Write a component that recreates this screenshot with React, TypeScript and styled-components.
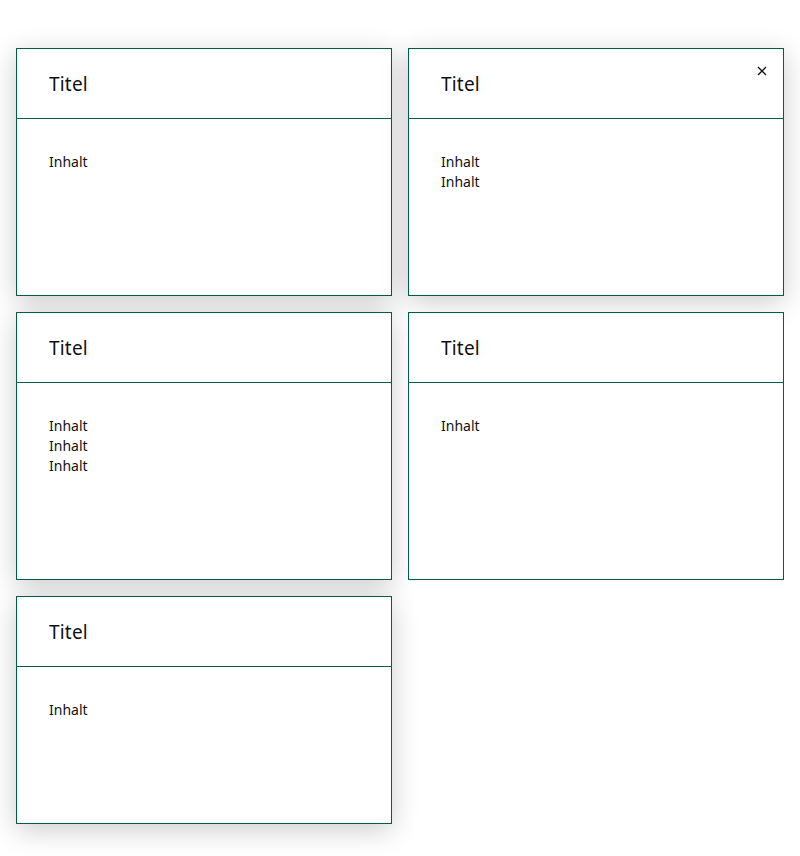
import React from "react";
import styled, { createGlobalStyle } from "styled-components";

const GlobalStyle = createGlobalStyle`
  html, body {
    margin: 0;
    padding: 0;
    background: #ffffff;
  }
  body {
    font-family: "Noto Sans", "Open Sans", sans-serif;
    color: #111;
  }
`;

const Page = styled.div`
  padding: 48px 16px 32px;
`;

const Grid = styled.div`
  display: grid;
  grid-template-columns: 376px 376px;
  gap: 16px;
`;

const Card = styled.div<{ $flat?: boolean; $height: number }>`
  position: relative;
  box-sizing: border-box;
  height: ${({ $height }) => $height}px;
  border: 1px solid #005e46;
  background: #fff;
  box-shadow: ${({ $flat }) =>
    $flat ? "none" : "0 6px 26px rgba(0, 0, 0, 0.2)"};
`;

const Header = styled.div`
  height: 70px;
  box-sizing: border-box;
  border-bottom: 1px solid #005e46;
  padding: 0 32px;
  display: flex;
  align-items: center;
`;

const Title = styled.h2`
  margin: 0;
  font-size: 19px;
  font-weight: 400;
  letter-spacing: 0.2px;
  color: #111;
`;

const Body = styled.div`
  padding: 33px 32px;
  font-size: 14px;
  line-height: 20px;
  color: #111;
`;

const Close = styled.button`
  position: absolute;
  top: 13px;
  right: 12px;
  width: 18px;
  height: 18px;
  padding: 0;
  border: 0;
  background: none;
  display: flex;
  align-items: center;
  justify-content: center;
  cursor: pointer;
`;

type CardData = { lines: number; height: number; close?: boolean; flat?: boolean };

const cards: CardData[] = [
  { lines: 1, height: 248 },
  { lines: 2, height: 248, close: true },
  { lines: 3, height: 268 },
  { lines: 1, height: 268, flat: true },
  { lines: 1, height: 228 },
];

export default function App() {
  return (
    <Page>
      <GlobalStyle />
      <Grid>
        {cards.map((c, i) => (
          <Card key={i} $flat={c.flat} $height={c.height}>
            <Header>
              <Title>Titel</Title>
            </Header>
            {c.close && (
              <Close aria-label="Schließen">
                <svg width="10" height="10" viewBox="0 0 10 10">
                  <path d="M1 1 L9 9 M9 1 L1 9" stroke="#111" strokeWidth="1.3" />
                </svg>
              </Close>
            )}
            <Body>
              {Array.from({ length: c.lines }).map((_, j) => (
                <div key={j}>Inhalt</div>
              ))}
            </Body>
          </Card>
        ))}
      </Grid>
    </Page>
  );
}
